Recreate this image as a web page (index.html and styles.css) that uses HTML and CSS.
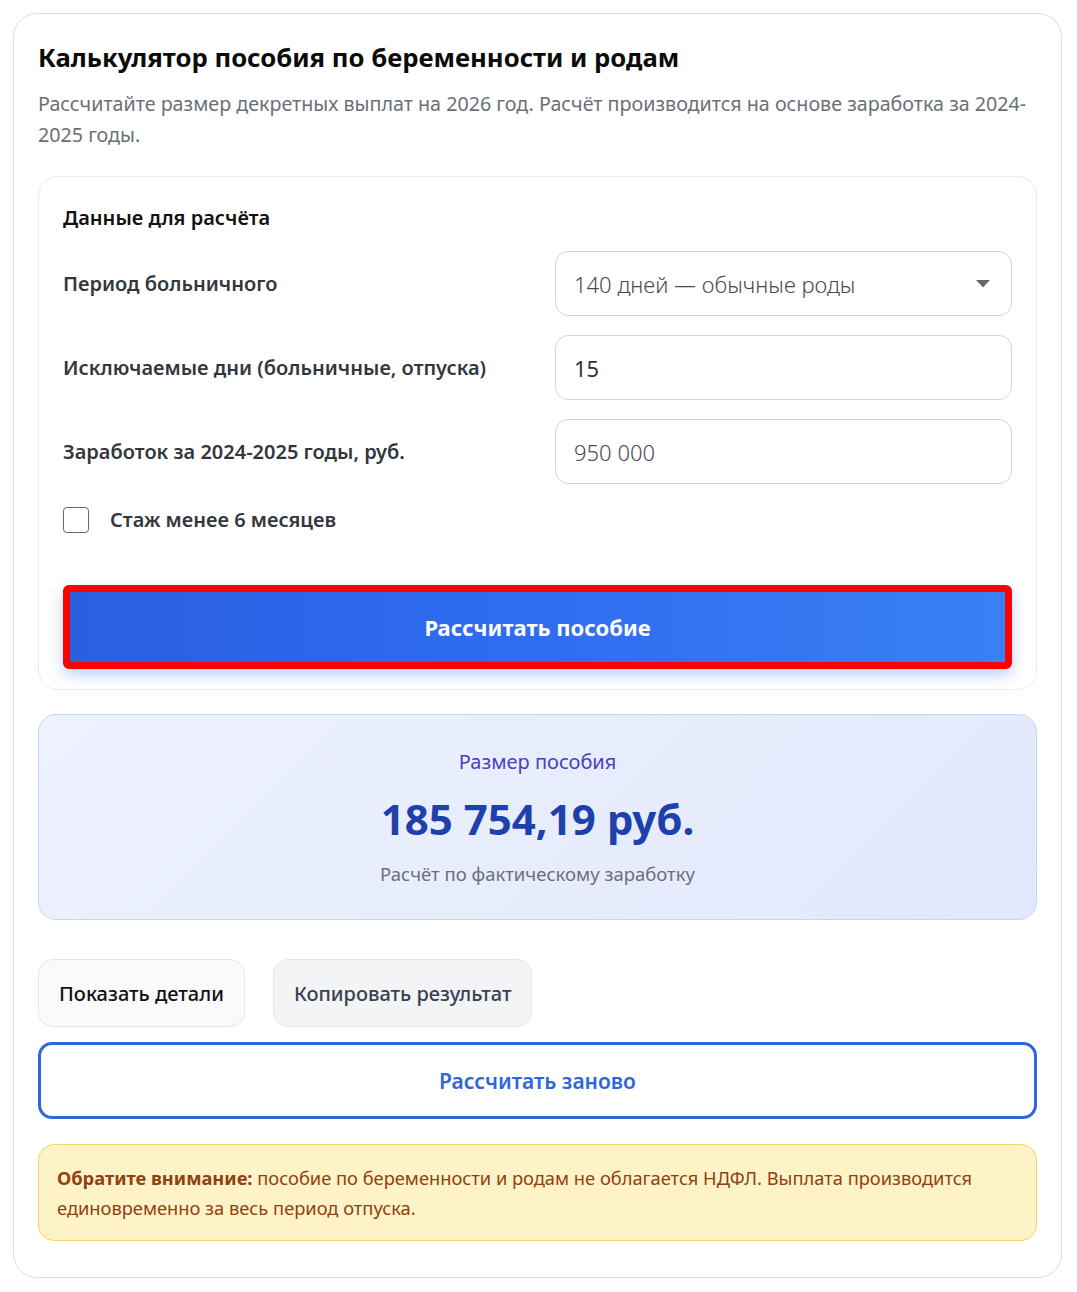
FILE: index.html
```html
<!DOCTYPE html>
<html lang="ru">
<head>
    <meta charset="UTF-8">
    <meta name="viewport" content="width=device-width, initial-scale=1.0">
    <title>Калькулятор пособия по беременности и родам</title>
    <link rel="stylesheet" href="styles.css">
</head>
<body>
    <div class="calc">
        <h1>Калькулятор пособия по беременности и родам</h1>
        <p class="lead">Рассчитайте размер декретных выплат на 2026 год. Расчёт производится на основе заработка за 2024-<wbr>2025 годы.</p>

        <div class="form-card">
            <h2>Данные для расчёта</h2>

            <div class="row">
                <label class="label">Период больничного</label>
                <div class="field select">
                    <span class="value light">140 дней — обычные роды</span>
                    <svg class="arrow" width="16" height="10" viewBox="0 0 16 10"><path d="M1 1h14L8 8.5z" fill="#666"/></svg>
                </div>
            </div>

            <div class="row">
                <label class="label">Исключаемые дни (больничные, отпуска)</label>
                <div class="field"><span class="value">15</span></div>
            </div>

            <div class="row">
                <label class="label">Заработок за 2024-2025 годы, руб.</label>
                <div class="field"><span class="value light">950 000</span></div>
            </div>

            <div class="check">
                <span class="box"></span>
                <span class="label">Стаж менее 6 месяцев</span>
            </div>

            <button class="btn-main">Рассчитать пособие</button>
        </div>

        <div class="result">
            <div class="result-title">Размер пособия</div>
            <div class="result-sum">185 754,19 руб.</div>
            <div class="result-note">Расчёт по фактическому заработку</div>
        </div>

        <div class="actions">
            <button class="btn-light">Показать детали</button>
            <button class="btn-gray">Копировать результат</button>
        </div>

        <button class="btn-outline">Рассчитать заново</button>

        <div class="notice">
            <p><strong>Обратите внимание:</strong> пособие по беременности и родам не облагается НДФЛ. Выплата производится единовременно за весь период отпуска.</p>
        </div>
    </div>
</body>
</html>
```

FILE: styles.css
```css
body {
    margin: 0;
    padding: 13px 15px 15px 13px;
    background: #fff;
    font-family: "Noto Sans", "Open Sans", Arial, sans-serif;
    color: #111;
}
.calc {
    border: 1px solid #dcdcdc;
    border-radius: 24px;
    padding: 22px 24px 36px;
}
h1 {
    margin: 5px 0 13px;
    font-size: 25.7px;
    font-weight: 700;
    line-height: 34px;
    color: #0b0b0b;
}
.lead {
    margin: 0 0 26px;
    font-size: 19.7px;
    line-height: 31px;
    color: #6b7078;
}
.form-card {
    border: 1px solid #ebebeb;
    border-radius: 20px;
    padding: 24px 24px 20px;
}
h2 {
    margin: 3px 0 19px;
    font-size: 20px;
    font-weight: 600;
    line-height: 28px;
    color: #111;
}
.row {
    display: flex;
    align-items: center;
    justify-content: space-between;
    margin-bottom: 19px;
}
.label {
    font-size: 20px;
    font-weight: 600;
    color: #33373d;
}
.field {
    box-sizing: border-box;
    width: 457px;
    height: 65px;
    border: 1px solid #d4d6da;
    border-radius: 13px;
    display: flex;
    align-items: center;
    justify-content: space-between;
    padding: 0 20px 0 18px;
}
.value {
    font-size: 22px;
    color: #333;
}
.value.light {
    font-weight: 300;
    color: #4a4a4a;
}
.check {
    display: flex;
    align-items: center;
    gap: 21px;
    margin: 22px 0 52px;
}
.box {
    width: 24px;
    height: 24px;
    border: 1.5px solid #6b6b6b;
    border-radius: 4px;
}
.btn-main {
    display: block;
    width: 100%;
    height: 84px;
    border: 7px solid #ff0000;
    border-radius: 6px;
    background: linear-gradient(90deg, #2a5fe0 0%, #2f6df0 50%, #3a80f3 100%);
    box-shadow: 0 6px 14px rgba(37, 99, 235, 0.3);
    color: #fff;
    font-family: inherit;
    font-size: 22px;
    font-weight: 700;
    cursor: pointer;
}
.result {
    margin-top: 24px;
    border: 1px solid #c9d3f7;
    border-radius: 18px;
    background: linear-gradient(135deg, #eef2fe 0%, #e2e8fc 100%);
    text-align: center;
    padding: 33px 0 31px;
}
.result-title {
    font-size: 20px;
    line-height: 28px;
    color: #4a3fc4;
}
.result-sum {
    margin: 14px 0 12px;
    font-size: 42px;
    font-weight: 700;
    line-height: 58px;
    color: #1d40ad;
}
.result-note {
    font-size: 18.5px;
    line-height: 28px;
    color: #6b7078;
}
.actions {
    display: flex;
    gap: 28px;
    margin-top: 39px;
}
.actions button {
    height: 68px;
    padding: 0 20px;
    border: 1px solid #e6e7ea;
    border-radius: 15px;
    font-family: inherit;
    font-size: 20px;
    font-weight: 500;
}
.btn-light {
    background: #f9fafb;
    color: #111;
}
.btn-gray {
    background: #f3f4f6;
    color: #374151;
}
.btn-outline {
    display: block;
    width: 100%;
    height: 77px;
    margin-top: 15px;
    border: 3px solid #2f66d9;
    border-radius: 14px;
    background: #fff;
    color: #2f66d9;
    font-family: inherit;
    font-size: 21px;
    font-weight: 600;
}
.notice {
    margin-top: 25px;
    padding: 18px 18px 17px;
    border: 1px solid #f4d66a;
    border-radius: 16px;
    background: #fef3c7;
    color: #92400e;
    font-size: 18.3px;
    line-height: 30px;
}
.notice p {
    margin: 0;
}
.notice strong {
    font-weight: 700;
}
```
